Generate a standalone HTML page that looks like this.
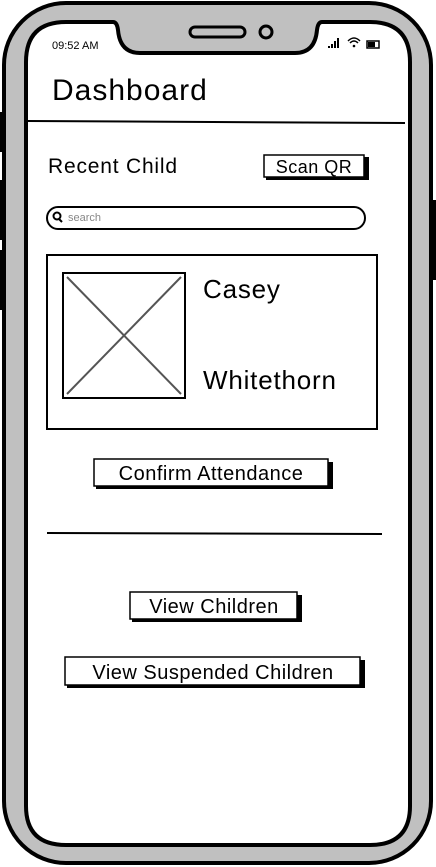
<!DOCTYPE html>
<html><head><meta charset="utf-8"><style>
html,body{margin:0;padding:0;background:#fff;width:436px;height:867px;overflow:hidden}
svg{display:block}
text{font-family:"Liberation Sans",sans-serif;fill:#000}
</style></head><body>
<svg width="436" height="867" viewBox="0 0 436 867">
<rect x="0" y="112" width="4" height="40" fill="#000"/>
<rect x="0" y="180" width="4" height="60" fill="#000"/>
<rect x="0" y="250" width="4" height="60" fill="#000"/>
<rect x="432" y="200" width="4" height="80" fill="#000"/>
<rect x="4" y="3" width="427" height="860" rx="62" fill="#c0c0c0" stroke="#000" stroke-width="4"/>
<path d="M66 22 H113 Q117 22 118 30 Q120 53 140 53 H295 Q315 53 317 30 Q318 22 322 22 H370 Q410 22 410 62 V806 Q410 845 370 845 H66 Q26 845 26 806 V62 Q26 22 66 22 Z" fill="#fff" stroke="#000" stroke-width="4"/>
<rect x="190" y="27" width="55" height="10" rx="5" fill="#c0c0c0" stroke="#000" stroke-width="3"/>
<ellipse cx="266" cy="32" rx="6" ry="6" fill="#c0c0c0" stroke="#000" stroke-width="3"/>
<text x="52" y="49" font-size="11">09:52 AM</text>
<g fill="#000"><rect x="328" y="46" width="2" height="2"/><rect x="331" y="44" width="2" height="4"/><rect x="334" y="41" width="2" height="7"/><rect x="337" y="38" width="2" height="10"/></g>
<path d="M348 41 Q354 35 360 41 M350 43 Q354 39 358 43" stroke="#000" stroke-width="1.5" fill="none"/><circle cx="354" cy="46" r="1.3"/>
<rect x="367" y="41" width="12" height="7" fill="none" stroke="#000" stroke-width="1.5"/><rect x="368" y="42" width="7" height="5"/>
<text x="52" y="100" font-size="30" letter-spacing="1">Dashboard</text>
<line x1="28" y1="121" x2="405" y2="123" stroke="#000" stroke-width="2"/>
<text x="48" y="173" font-size="21" letter-spacing="0.8">Recent Child</text>
<rect x="266" y="157" width="103" height="23" fill="#000"/>
<rect x="264" y="155" width="100" height="22" fill="#fff" stroke="#000" stroke-width="1.5"/>
<text x="314" y="173" font-size="18" text-anchor="middle" letter-spacing="0.5">Scan QR</text>
<rect x="47" y="207" width="318" height="22" rx="11" fill="#fff" stroke="#000" stroke-width="2"/>
<circle cx="57" cy="216" r="3.5" fill="none" stroke="#000" stroke-width="2"/><line x1="59" y1="219" x2="62" y2="222" stroke="#000" stroke-width="2"/>
<text x="68" y="221" font-size="11" style="fill:#888">search</text>
<rect x="47" y="255" width="330" height="174" fill="#fff" stroke="#000" stroke-width="2"/>
<rect x="63" y="273" width="122" height="125" fill="#fff" stroke="#000" stroke-width="2"/>
<line x1="67" y1="277" x2="181" y2="394" stroke="#555" stroke-width="2"/><line x1="181" y1="277" x2="67" y2="394" stroke="#555" stroke-width="2"/>
<text x="203" y="298" font-size="26" letter-spacing="0.8">Casey</text>
<text x="203" y="389" font-size="26" letter-spacing="0.8">Whitethorn</text>
<rect x="96" y="462" width="237" height="27" fill="#000"/>
<rect x="94" y="459" width="234" height="27" fill="#fff" stroke="#000" stroke-width="1.5"/>
<text x="211" y="480" font-size="20" text-anchor="middle" letter-spacing="0.5">Confirm Attendance</text>
<line x1="47" y1="533" x2="382" y2="534" stroke="#000" stroke-width="2"/>
<rect x="132" y="595" width="170" height="27" fill="#000"/>
<rect x="130" y="592" width="167" height="27" fill="#fff" stroke="#000" stroke-width="1.5"/>
<text x="214" y="613" font-size="20" text-anchor="middle" letter-spacing="0.5">View Children</text>
<rect x="67" y="660" width="298" height="28" fill="#000"/>
<rect x="65" y="657" width="295" height="28" fill="#fff" stroke="#000" stroke-width="1.5"/>
<text x="213" y="679" font-size="20" text-anchor="middle" letter-spacing="0.5">View Suspended Children</text>
</svg>
</body></html>
